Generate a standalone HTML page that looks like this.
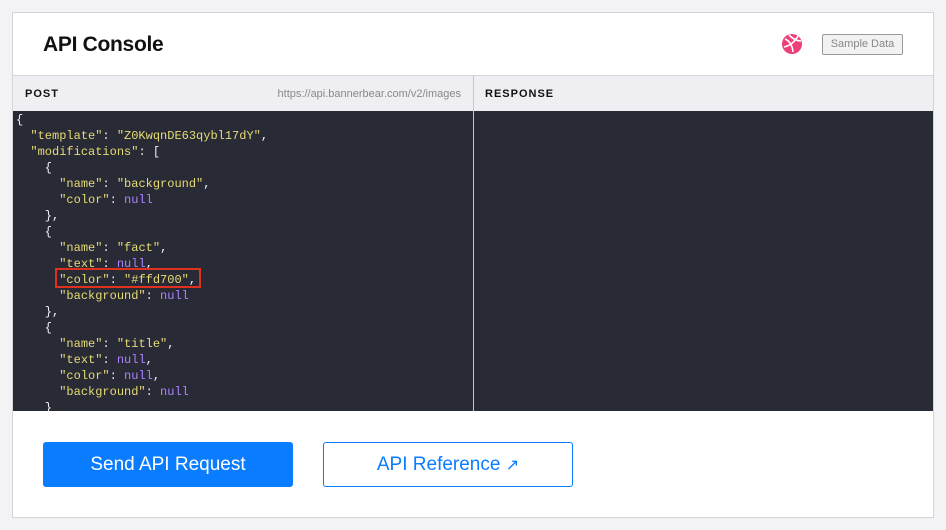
<!DOCTYPE html>
<html><head><style>
*{margin:0;padding:0;box-sizing:border-box}
body{width:946px;height:530px;background:#f3f3f6;font-family:"Liberation Sans",sans-serif;position:relative;overflow:hidden}
.card{position:absolute;left:12px;top:12px;width:922px;height:506px;background:#fff;border:1px solid #d4d4d8}
h1{position:absolute;left:30px;top:20px;font-size:21px;font-weight:bold;color:#111;letter-spacing:-0.3px}
.bar{position:absolute;left:0;top:62px;width:920px;height:36px;background:#efeff3;border-top:1px solid #d6d6da}
.lbl{position:absolute;top:12px;font-size:11px;font-weight:bold;letter-spacing:1px;color:#111}
.url{position:absolute;top:12px;right:472px;font-size:11px;color:#888}
.code{position:absolute;left:0;top:98px;width:920px;height:300px;background:#282a36;overflow:hidden}
.div{position:absolute;left:460px;top:62px;width:1px;height:336px;background:#c8c8cc}
pre{position:absolute;left:3px;top:1px;font-family:"Liberation Mono",monospace;font-size:12px;line-height:16px;color:#f0f0f0}
.s{color:#e6db74}.n{color:#ae81ff}
.box{position:absolute;left:42px;top:157px;width:146px;height:20px;border:2px solid #e0301e}
.b1{position:absolute;left:30px;top:429px;width:250px;height:45px;background:#0a7cff;border-radius:3px;color:#fff;font-size:19px;text-align:center;line-height:45px}
.b2{position:absolute;left:310px;top:429px;width:250px;height:45px;border:1px solid #0a7cff;border-radius:3px;color:#0a7cff;font-size:19px;text-align:center;line-height:43px}
.sd{position:absolute;left:809px;top:21px;width:81px;height:21px;border:1px solid #999;border-radius:2px;background:#f2f2f2;font-size:11px;color:#888;text-align:center;line-height:19px}
</style></head><body>
<div class="card">
<h1>API Console</h1>
<svg style="position:absolute;left:768px;top:20px" width="22" height="22" viewBox="0 0 22 22"><circle cx="11" cy="11" r="10" fill="#ec407a"/><path d="M4 6 Q11 9 12 19 M8 2 Q14 8 20 8 M3 14 Q12 12 17 3" stroke="#fff" stroke-width="1.6" fill="none"/></svg>
<div class="sd">Sample Data</div>
<div class="bar"><span class="lbl" style="left:12px">POST</span><span class="url">https://api.bannerbear.com/v2/images</span><span class="lbl" style="left:472px">RESPONSE</span></div>
<div class="code"><pre>{
  <span class="s">"template"</span>: <span class="s">"Z0KwqnDE63qybl17dY"</span>,
  <span class="s">"modifications"</span>: [
    {
      <span class="s">"name"</span>: <span class="s">"background"</span>,
      <span class="s">"color"</span>: <span class="n">null</span>
    },
    {
      <span class="s">"name"</span>: <span class="s">"fact"</span>,
      <span class="s">"text"</span>: <span class="n">null</span>,
      <span class="s">"color"</span>: <span class="s">"#ffd700"</span>,
      <span class="s">"background"</span>: <span class="n">null</span>
    },
    {
      <span class="s">"name"</span>: <span class="s">"title"</span>,
      <span class="s">"text"</span>: <span class="n">null</span>,
      <span class="s">"color"</span>: <span class="n">null</span>,
      <span class="s">"background"</span>: <span class="n">null</span>
    }
</pre><div class="box"></div></div>
<div class="div"></div>
<div class="b1">Send API Request</div>
<div class="b2">API Reference <span style="font-size:16px">↗</span></div>
</div>
</body></html>
